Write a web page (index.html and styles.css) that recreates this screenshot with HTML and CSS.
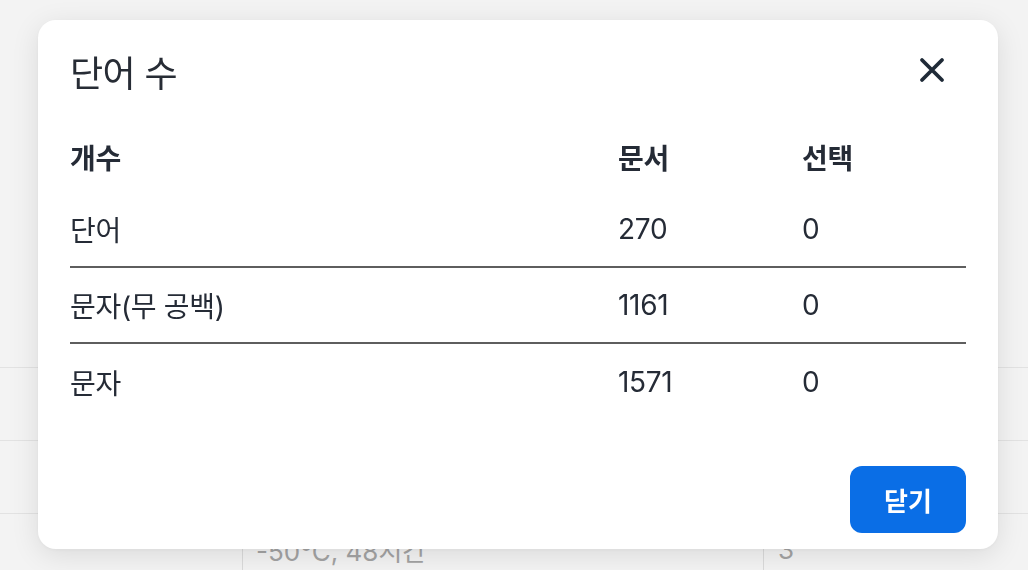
FILE: index.html
```html
<!DOCTYPE html>
<html lang="ko">
<head>
<meta charset="utf-8">
<title>단어 수</title>
<link rel="stylesheet" href="styles.css">
</head>
<body>
<div class="page">
  <div class="bg-table">
    <div class="bg-row"></div>
    <div class="bg-row"></div>
    <div class="bg-row bg-last">
      <div class="bg-cell bg-c1"></div>
      <div class="bg-cell bg-c2">-50°C, 48시간</div>
      <div class="bg-cell bg-c3">3</div>
    </div>
  </div>
</div>

<div class="overlay">
  <div class="modal" role="dialog" aria-labelledby="modal-title">
    <div class="modal-header">
      <h2 id="modal-title" class="modal-title">단어 수</h2>
      <button class="close-btn" aria-label="닫기">
        <svg width="26" height="26" viewBox="0 0 26 26" fill="none">
          <path d="M3 3 L23 23 M23 3 L3 23" stroke="#1f2a37" stroke-width="3.8" stroke-linecap="round"/>
        </svg>
      </button>
    </div>
    <div class="count-table">
      <div class="row head">
        <div class="cell c1">개수</div>
        <div class="cell c2">문서</div>
        <div class="cell c3">선택</div>
      </div>
      <div class="row data bordered">
        <div class="cell c1">단어</div>
        <div class="cell c2">270</div>
        <div class="cell c3">0</div>
      </div>
      <div class="row data bordered">
        <div class="cell c1">문자(무 공백)</div>
        <div class="cell c2">1161</div>
        <div class="cell c3">0</div>
      </div>
      <div class="row data">
        <div class="cell c1">문자</div>
        <div class="cell c2">1571</div>
        <div class="cell c3">0</div>
      </div>
    </div>
    <div class="modal-footer">
      <button class="primary-btn">닫기</button>
    </div>
  </div>
</div>
</body>
</html>
```
FILE: styles.css
```css
* { box-sizing: border-box; }

html, body {
  margin: 0;
  padding: 0;
  height: 100%;
}

body {
  background: #f3f3f3;
  font-family: Inter, "Noto Sans CJK KR", sans-serif;
  color: #252b36;
  overflow: hidden;
}

.page {
  height: 570px;
  display: flex;
  flex-direction: column;
  padding-top: 367px;
}

.bg-table {
  display: flex;
  flex-direction: column;
}

.bg-row {
  height: 73px;
  border-top: 1px solid #e2e2e2;
  display: flex;
}

.bg-cell {
  height: 100%;
  display: flex;
  align-items: center;
  font-size: 26px;
  color: #a3a3a3;
}

.bg-c1 { width: 242px; }
.bg-c2 {
  width: 521px;
  border-left: 1px solid #dadada;
  padding-left: 13px;
  padding-bottom: 2px;
}
.bg-c3 {
  flex: 1;
  border-left: 1px solid #dadada;
  padding-left: 14px;
  padding-bottom: 2px;
}

.overlay {
  position: fixed;
  inset: 0;
  display: flex;
  justify-content: flex-start;
  align-items: flex-start;
  padding: 20px 0 0 38px;
}

.modal {
  width: 960px;
  height: 529px;
  background: #ffffff;
  border-radius: 18px;
  box-shadow: 0 6px 28px rgba(0, 0, 0, 0.10), 0 1px 4px rgba(0, 0, 0, 0.04);
  padding: 0 32px 16px;
  display: flex;
  flex-direction: column;
}

.modal-header {
  display: flex;
  align-items: center;
  justify-content: space-between;
  height: 101px;
  padding-top: 1px;
}

.modal-title {
  margin: 0;
  font-size: 36px;
  font-weight: 400;
  color: #272c35;
  letter-spacing: -0.6px;
}

.close-btn {
  background: none;
  border: none;
  padding: 0;
  margin-right: 21px;
  margin-top: -2px;
  width: 26px;
  height: 26px;
  display: flex;
  cursor: pointer;
}

.count-table {
  display: flex;
  flex-direction: column;
}

.row {
  display: flex;
  align-items: center;
}

.row.head {
  height: 71px;
  font-weight: 700;
}

.row.data {
  height: 76px;
}

.row.bordered {
  border-bottom: 2px solid #5e5e5e;
}

.cell {
  font-size: 28px;
  letter-spacing: -0.3px;
}

.c1 { width: 548px; }
.c2 { width: 184px; }
.c3 { flex: 1; }

.modal-footer {
  margin-top: auto;
  display: flex;
  justify-content: flex-end;
}

.primary-btn {
  width: 116px;
  height: 67px;
  border: none;
  border-radius: 12px;
  background: #0a6ee6;
  color: #ffffff;
  font-family: Inter, "Noto Sans CJK KR", sans-serif;
  font-size: 26px;
  font-weight: 700;
  cursor: pointer;
}
```
